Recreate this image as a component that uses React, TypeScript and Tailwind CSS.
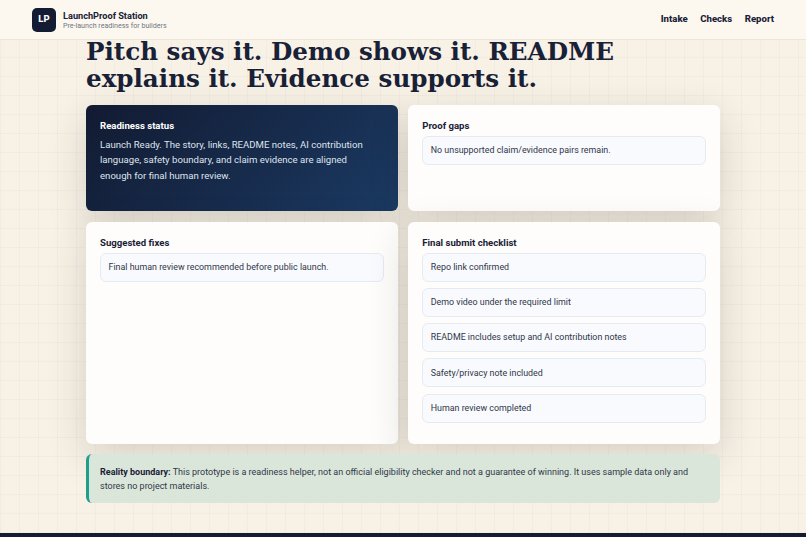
export default function App() {
  const Item = ({ children }: { children: React.ReactNode }) => (
    <div className="h-[29px] flex items-center rounded-md border border-[#e6eaf2] bg-[#f9fafe] text-[8.9px] text-[#2f3747] pl-[7.5px] pt-[1px]">{children}</div>
  );
  const cardTitle = "text-[9.6px] font-bold leading-[13px] mb-[4px] -mt-[0.5px]";
  const card = "rounded-md p-[14px] shadow-[0_12px_40px_rgba(40,35,25,0.16)]";
  return (
    <div className="h-[537px] overflow-hidden flex flex-col font-['Roboto',sans-serif] bg-[#f8f1e6] bg-[linear-gradient(rgba(20,30,50,0.025)_1px,transparent_1px),linear-gradient(90deg,rgba(20,30,50,0.025)_1px,transparent_1px)] bg-[length:19px_19px]">
      <header className="h-[40px] shrink-0 flex items-center justify-between px-[32px] bg-[#fdf8ef] border-b border-[#ece6da]">
        <div className="flex items-center gap-[7px]">
          <div className="w-[24px] h-[24px] rounded-[5px] bg-[#141c33] text-white text-[9.5px] font-extrabold flex items-center justify-center">LP</div>
          <div className="flex flex-col">
            <div className="text-[9.2px] leading-[11px] font-bold text-[#182136]">LaunchProof Station</div>
            <div className="text-[7.1px] leading-[9px] text-[#6f7684]">Pre-launch readiness for builders</div>
          </div>
        </div>
        <nav className="flex gap-[12.5px] text-[9.6px] font-extrabold text-[#182136]">
          <span>Intake</span><span>Checks</span><span>Report</span>
        </nav>
      </header>
      <main className="w-[634px] ml-[86px] flex-1 flex flex-col">
        <h1 className="font-['DejaVu_Serif',serif] font-bold text-[24.6px] leading-[27px] mb-[13.5px] -mt-[2.5px] text-[#182136]">Pitch says it. Demo shows it. README<br />explains it. Evidence supports it.</h1>
        <div className="grid grid-cols-2 gap-x-[10.5px] gap-y-[11px]">
          <section className={`h-[106px] bg-[linear-gradient(135deg,#121a31,#1b3a63)] ${card}`}>
            <h2 className={`${cardTitle} text-white`}>Readiness status</h2>
            <p className="mt-[5px] max-w-[275px] text-[9.6px] leading-[15.5px] text-[#dfe4ed]">Launch Ready. The story, links, README notes, AI contribution language, safety boundary, and claim evidence are aligned enough for final human review.</p>
          </section>
          <section className={`h-[106px] bg-[#fffdfb] ${card}`}>
            <h2 className={`${cardTitle} text-[#182136]`}>Proof gaps</h2>
            <Item>No unsupported claim/evidence pairs remain.</Item>
          </section>
          <section className={`h-[222px] bg-[#fffdfb] ${card}`}>
            <h2 className={`${cardTitle} text-[#182136]`}>Suggested fixes</h2>
            <Item>Final human review recommended before public launch.</Item>
          </section>
          <section className={`h-[222px] bg-[#fffdfb] ${card}`}>
            <h2 className={`${cardTitle} text-[#182136]`}>Final submit checklist</h2>
            <div className="flex flex-col gap-[6.3px]">
              <Item>Repo link confirmed</Item>
              <Item>Demo video under the required limit</Item>
              <Item>README includes setup and AI contribution notes</Item>
              <Item>Safety/privacy note included</Item>
              <Item>Human review completed</Item>
            </div>
          </section>
        </div>
        <div className="mt-[10px] h-[49px] rounded-md border-l-[3px] border-[#1f9e8e] bg-[#dbe6db] pl-[11px] pr-[14px] flex items-center text-[9px] leading-[14px] text-[#2f3747]">
          <p><strong className="font-bold text-[#182136]">Reality boundary:</strong> This prototype is a readiness helper, not an official eligibility checker and not a guarantee of winning. It uses sample data only and stores no project materials.</p>
        </div>
      </main>
      <footer className="h-[4px] shrink-0 bg-[#141c33]" />
    </div>
  );
}
